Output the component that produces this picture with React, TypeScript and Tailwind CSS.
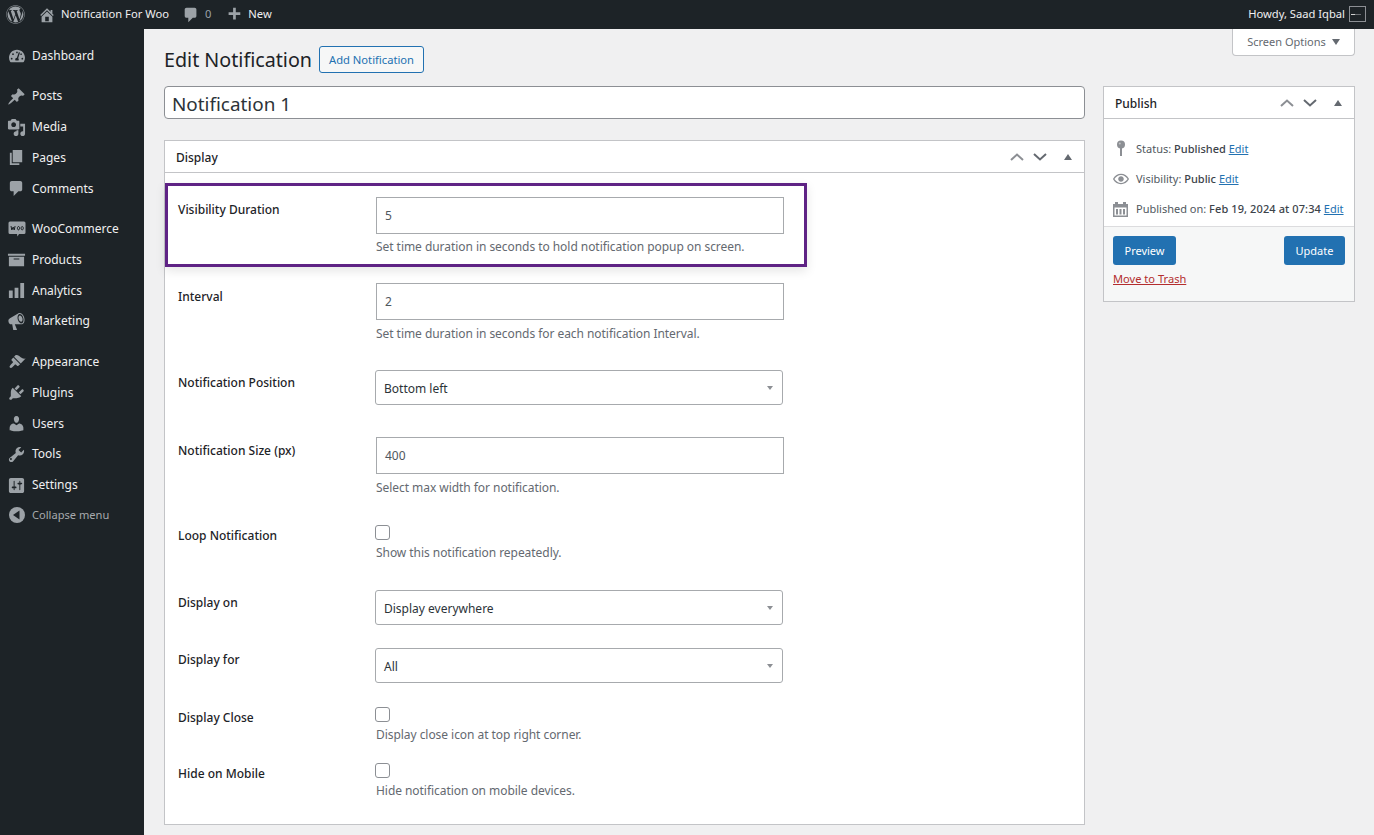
import React from "react";
import { FaWordpress, FaTachometerAlt } from "react-icons/fa";

const ic = "#9ca2a7";
const Dash = ({ d, s = 19, c = ic }: { d: string; s?: number; c?: string }) => (
  <svg width={s} height={s} viewBox="0 0 20 20" fill={c}><path d={d} /></svg>
);
const P = {
  comment: "M5 2h9c1.100 0 2 .9 2 2v7c0 1.100-.9 2-2 2h-2l-5 5v-5H5c-1.100 0-2-.9-2-2V4c0-1.100.9-2 2-2z",
  media: "M13 11V4c0-.55-.45-1-1-1h-1.670L9 1H5L3.670 3H2c-.55 0-1 .45-1 1v7c0 .55.45 1 1 1h10c.55 0 1-.45 1-1zM7 4.500c1.380 0 2.500 1.120 2.500 2.500S8.380 9.500 7 9.500 4.500 8.380 4.500 7 5.620 4.500 7 4.500zM14 6h5v10.500c0 1.380-1.120 2.500-2.500 2.500S14 17.880 14 16.500s1.120-2.500 2.500-2.500c.17 0 .34.020.5.050V9h-3V6zm-4 8.050V13h2v3.500c0 1.380-1.120 2.500-2.500 2.500S7 17.880 7 16.500 8.120 14 9.500 14c.17 0 .34.020.5.050z",
  page: "M6 15V2h10v13H6zm-1 1h8v2H3V5h2v11z",
  archive: "M19 4v2H1V4h18zM2 7h16v10H2V7zm11 3V9H7v1h6z",
  bars: "M18 18V2h-4v16h4zm-6 0V7H8v11h4zm-6 0v-8H2v8h4z",
  users: "M10 9.250c-2.270 0-2.730-3.440-2.730-3.440C7 4.020 7.820 2 9.970 2c2.160 0 2.980 2.020 2.710 3.810 0 0-.41 3.440-2.680 3.440zm0 2.570L12.720 10c2.390 0 4.520 2.330 4.520 4.530v2.490s-3.650 1.130-7.240 1.130c-3.650 0-7.240-1.130-7.240-1.130v-2.490c0-2.250 1.940-4.480 4.470-4.480z",
  tools: "M16.680 9.770c-1.340 1.340-3.300 1.670-4.950.99l-5.410 6.520c-.99.99-2.590.99-3.570 0-.99-.98-.99-2.580 0-3.570l6.520-5.420c-.68-1.650-.35-3.610.99-4.950 1.280-1.280 3.120-1.620 4.720-1.060l-2.890 2.890 2.820 2.820 2.860-2.870c.53 1.580.18 3.400-1.090 4.650zM4.850 15.400c.39-.39.39-1.030 0-1.420-.39-.39-1.030-.39-1.420 0-.39.39-.39 1.030 0 1.420.39.390 1.030.390 1.420 0z",
  settings: "M18 16V4c0-1.100-.9-2-2-2H4c-1.100 0-2 .9-2 2v12c0 1.100.9 2 2 2h12c1.100 0 2-.9 2-2zM8 11h1c.55 0 1 .45 1 1s-.45 1-1 1H8v1.500c0 .28-.22.5-.5.5s-.5-.22-.5-.5V13H6c-.55 0-1-.45-1-1s.45-1 1-1h1V5.500c0-.28.22-.5.5-.5s.5.22.5.5V11zm5-2h-1c-.55 0-1-.45-1-1s.45-1 1-1h1V5.500c0-.28.22-.5.5-.5s.5.22.5.5V7h1c.55 0 1 .45 1 1s-.45 1-1 1h-1v5.500c0 .28-.22.5-.5.5s-.5-.22-.5-.5V9z",
  post: "M10.440 3.020l1.820-1.820 6.360 6.350-1.830 1.820c-1.050-.68-2.480-.57-3.410.36l-.75.750c-.92.930-1.040 2.350-.35 3.410l-1.830 1.820-2.410-2.410-2.800 2.790c-.42.420-3.380 2.710-3.800 2.290s1.860-3.390 2.280-3.810l2.790-2.790L4.100 9.360l1.830-1.820c1.050.69 2.480.57 3.400-.36l.75-.75c.93-.920 1.050-2.350.36-3.410z",
  plugins: "M13.110 4.360L9.870 7.600 8 5.730l3.240-3.240c.35-.34 1.050-.2 1.560.32.52.51.66 1.210.31 1.550zm-8 1.770l.91-1.120 9.010 9.010-1.190.84c-.71.710-2.630 1.160-3.820 1.160H6.140L4.900 17.260c-.59.590-1.540.59-2.120 0-.59-.58-.59-1.530 0-2.120l1.240-1.240v-3.880c0-1.130.4-3.190 1.090-3.890zm7.260 3.970l3.240-3.240c.34-.35 1.040-.21 1.550.31.520.51.66 1.210.31 1.560l-3.240 3.240z",
  appearance: "M14.480 11.060L7.410 3.990l1.500-1.500c.5-.56 2.300-.47 3.510.32 1.210.8 1.430 1.280 2.910 2.100 1.180.64 2.450 1.260 4.230.91zm-.71.71L6.700 4.700 4.930 6.470c-.39.39-.39 1.020 0 1.410l1.060 1.060c.39.39.39 1.030 0 1.420-.6.600-1.140 1.060-1.590 1.490-.25.240-.46.460-.61.650-1 .97-1.580 2-.72 2.860.83.830 1.830.300 2.850-.73.23-.18.47-.41.72-.660.39-.39.73-.77 1.490-1.590.39-.39 1.020-.39 1.410 0l1.060 1.060c.39.39 1.020.39 1.410 0z",
  megaphone: "M18.150 5.940c.46 1.620.38 3.220-.02 4.480-.42 1.280-1.260 2.180-2.300 2.480-.16.06-.26.06-.4.06-.06.02-.12.02-.18.02-.06.02-.14.02-.22.02h-6.800l2.220 5.500c.02.14-.06.26-.14.34-.08.1-.24.16-.34.16H6.950c-.1 0-.26-.06-.34-.16-.08-.08-.16-.2-.14-.34l-1-5.500H4.250l-.02-.02c-.5.060-1.080-.18-1.540-.62s-.88-1.080-1.060-1.880c-.24-.8-.2-1.560-.02-2.200.18-.62.58-1.080 1.060-1.300l.02-.02 9-5.400c.1-.06.18-.1.24-.16.06-.04.14-.08.24-.12.16-.08.28-.12.5-.18 1.040-.3 2.240.1 3.220.98s1.840 2.240 2.260 3.860zm-2.580 5.980h-.02c.4-.1.74-.34 1.040-.7.58-.7.860-1.760.860-3.040 0-.64-.1-1.300-.28-1.980-.34-1.360-1.020-2.500-1.780-3.240s-1.680-1.100-2.460-.88c-.38.12-.72.34-.98.7-.6.7-.88 1.760-.88 3.040 0 .64.1 1.300.28 1.980.34 1.360 1.020 2.500 1.780 3.240.78.74 1.620 1.080 2.440.88zm-.48-1.660c-.56.14-1.200-.2-1.680-.72-.5-.52-.92-1.280-1.140-2.140-.24-.86-.24-1.700-.04-2.380.2-.66.62-1.200 1.160-1.340.56-.14 1.200.2 1.700.74.48.5.9 1.260 1.140 2.120.22.860.22 1.700.02 2.380-.2.66-.6 1.200-1.160 1.340z",
  home: "M16 8.500l1.530 1.530-1.060 1.060L10 4.620l-6.470 6.470-1.060-1.060L10 2.500l4 4v-2h2v4zm-6-2.460l6 5.990V18H4v-5.970zM12 17v-5H8v5h4z",
  plus: "M17 7v3h-5v5H9v-5H4V7h5V2h3v5h5z",
  eye: "M19.700 9.400C17.700 6 14.070 3.500 10 3.500S2.300 6 .3 9.400L0 10l.3.6c2 3.400 5.630 5.900 9.700 5.900s7.700-2.500 9.700-5.900l.3-.6-.3-.6zM10 15c-3.400 0-6.400-2.100-8.200-5C3.600 7.100 6.600 5 10 5s6.400 2.100 8.200 5c-1.800 2.900-4.800 5-8.200 5zm0-8.500C8.100 6.500 6.500 8.100 6.500 10s1.600 3.500 3.500 3.500 3.500-1.600 3.500-3.500S11.900 6.500 10 6.500z",
};

const Woo = () => (
  <svg width="18" height="18" viewBox="0 0 18 18"><path fill={ic} d="M2 1.500h14a1.500 1.500 0 0 1 1.500 1.500v9.500a1.500 1.500 0 0 1-1.500 1.500h-5l-1.500 2.500L9 14H2a1.500 1.500 0 0 1-1.500-1.500V3A1.500 1.500 0 0 1 2 1.500z" /><path fill="none" stroke="#1d2327" strokeWidth="1" d="M3 6l.8 4 1.400-3 1 3 .9-4M10.500 6.500a1.100 1.700 0 1 0 .01 0M14.200 6.500a1.100 1.700 0 1 0 .01 0" /></svg>
);
const Collapse = () => (
  <svg width="16" height="16" viewBox="0 0 16 16"><circle cx="8" cy="8" r="8" fill={ic} /><path d="M10.500 3.500v9L4 8z" fill="#1d2327" /></svg>
);
const Pin = () => (
  <svg width="10" height="16" viewBox="0 0 10 16" fill="#8c8f94"><circle cx="5" cy="4.500" r="4" /><path d="M4 8h2v8H4z" /><circle cx="3.800" cy="3.500" r="1" fill="#c3c4c7" /></svg>
);
const Calendar = () => (
  <svg width="15" height="15" viewBox="0 0 15 15" fill="#8c8f94"><path fillRule="evenodd" d="M0 2h2V0h3v2h5V0h3v2h2v13H0zM1.500 5.500V13.500h12V5.500zM3 7h2v5.500H3zM6.500 7h2v5.500h-2zM10 7h2v5.500h-2z" /></svg>
);
const Arrows = () => (
  <div className="flex items-center">
    <svg width="14" height="8" viewBox="0 0 14 8" fill="none" stroke="#8c8f94" strokeWidth="2"><path d="M1 7l6-5.500L13 7" /></svg>
    <svg className="ml-[9px]" width="14" height="8" viewBox="0 0 14 8" fill="none" stroke="#646970" strokeWidth="2"><path d="M1 1l6 5.500L13 1" /></svg>
    <svg className="ml-[17px]" width="8" height="6" viewBox="0 0 8 6" fill="#646970"><path d="M4 0l4 6H0z" /></svg>
  </div>
);

const menu: { l: string; i: React.ReactNode }[] = [
  { l: "Posts", i: <Dash d={P.post} /> },
  { l: "Media", i: <Dash d={P.media} /> },
  { l: "Pages", i: <Dash d={P.page} /> },
  { l: "Comments", i: <Dash d={P.comment} /> },
];
const menu2: { l: string; i: React.ReactNode }[] = [
  { l: "WooCommerce", i: <Woo /> },
  { l: "Products", i: <Dash d={P.archive} /> },
  { l: "Analytics", i: <Dash d={P.bars} /> },
  { l: "Marketing", i: <Dash d={P.megaphone} /> },
];
const menu3: { l: string; i: React.ReactNode }[] = [
  { l: "Appearance", i: <Dash d={P.appearance} /> },
  { l: "Plugins", i: <Dash d={P.plugins} /> },
  { l: "Users", i: <Dash d={P.users} /> },
  { l: "Tools", i: <Dash d={P.tools} /> },
  { l: "Settings", i: <Dash d={P.settings} /> },
];

const Item = ({ l, i }: { l: string; i: React.ReactNode }) => (
  <div className="flex h-[30.750px] items-center text-[12px] text-[#f0f0f1]">
    <div className="flex w-[32px] justify-center pl-[1px]">{i}</div>
    <span>{l}</span>
  </div>
);

const Label = ({ children, mt }: { children: React.ReactNode; mt: string }) => (
  <div className={`w-[198px] shrink-0 pt-[1px] text-[12px] font-medium leading-[18px] text-[#1d2327] ${mt}`}>{children}</div>
);
const TextField = ({ v }: { v: string }) => (
  <div className="flex h-[37px] w-[408px] items-center border border-[#a7aaad] bg-white pl-[8px] pt-[1px] text-[12px] text-[#50575e]">{v}</div>
);
const Help = ({ children, mt = "mt-[5px]" }: { children: React.ReactNode; mt?: string }) => (
  <div className={`text-[12px] leading-[18px] tracking-[-0.05px] text-[#646970] ${mt}`}>{children}</div>
);
const SelectF = ({ v, top = "pt-[3px]" }: { v: string; top?: string }) => (
  <div className="-ml-[1px] flex h-[35px] w-[408px] items-center justify-between rounded-[3px] border border-[#a7aaad] bg-white pl-[8px] pr-[9px] text-[12px] text-[#2c3338]">
    <span className={top}>{v}</span>
    <svg width="6" height="4" viewBox="0 0 6 4" fill="#8c8f94"><path d="M0 0h6L3 4z" /></svg>
  </div>
);
const Check = () => <div className="-ml-[1px] h-[15px] w-[15px] rounded-[3px] border border-[#8c8f94] bg-white" />;

const Edit = () => <a className="text-[#2271b1] underline">Edit</a>;

export default function App() {
  return (
    <div className="flex h-[835px] w-[1374px] flex-col overflow-hidden bg-[#f0f0f1] font-['Noto_Sans','Open_Sans',sans-serif]">
      <div className="flex h-[29px] shrink-0 items-center justify-between bg-[#1d2327] pl-[6px] pr-[8px] text-[11.200px] text-[#f0f0f1]">
        <div className="flex items-center">
          <FaWordpress size={19} color={ic} />
          <div className="ml-[13px]"><Dash d={P.home} s={18} /></div>
          <span className="ml-[5px]">Notification For Woo</span>
          <div className="ml-[13px]"><Dash d={P.comment} s={18} /></div>
          <span className="ml-[5px] text-[#9ca2a7]">0</span>
          <div className="ml-[14px]"><Dash d={P.plus} s={18} /></div>
          <span className="ml-[5px]">New</span>
        </div>
        <div className="flex items-center">
          <span>Howdy, Saad Iqbal</span>
          <div className="ml-[4px] flex h-[16px] w-[17px] items-center border border-[#8c8f94] bg-[#1d2327] pl-[1px]">
            <div className="h-[1px] w-[4px] bg-[#d0d0d0]" />
            <div className="h-[1px] w-[6px] bg-[#6b6f73]" />
          </div>
        </div>
      </div>
      <div className="flex min-h-0 flex-1">
        <nav className="w-[144px] shrink-0 bg-[#1d2327] pt-[11px]">
          <div className="pt-[1px]"><Item l="Dashboard" i={<FaTachometerAlt size={16} color={ic} />} /></div>
          <div className="mt-[9.300px]">{menu.map((m) => <Item key={m.l} l={m.l} i={m.i} />)}</div>
          <div className="mt-[9.700px]">{menu2.map((m) => <Item key={m.l} l={m.l} i={m.i} />)}</div>
          <div className="mt-[10px]">{menu3.map((m) => <Item key={m.l} l={m.l} i={m.i} />)}</div>
          <div className="-mt-[1px] flex h-[30.750px] items-center text-[11.100px] text-[#a7aaad]">
            <div className="flex w-[32px] justify-center pl-[1px]"><Collapse /></div>
            <span>Collapse menu</span>
          </div>
        </nav>
        <main className="relative min-w-0 flex-1 pl-[20px] pr-[19px]">
          <div className="absolute right-[19px] top-0 flex h-[27px] w-[123px] items-center justify-center rounded-b-[4px] border border-t-0 border-[#c3c4c7] bg-white text-[11px] text-[#646970]">
            Screen Options
            <svg className="ml-[6px]" width="8" height="6" viewBox="0 0 8 6" fill="#646970"><path d="M0 0h8L4 6z" /></svg>
          </div>
          <div className="h-[57px] pt-[17px]">
            <div className="flex h-[27px] items-center">
              <h1 className="text-[19.700px] leading-[27px] text-[#1d2327]">Edit Notification</h1>
              <div className="ml-[7px] flex h-[27px] w-[105px] items-center justify-center rounded-[3px] border border-[#2271b1] bg-[#f6f7f7] pt-[1px] text-[11.200px] text-[#2271b1]">Add Notification</div>
            </div>
          </div>
          <div className="flex gap-[18px]">
            <div className="w-[921px] shrink-0">
              <div className="flex h-[33px] items-center rounded-[4px] border border-[#8c8f94] bg-white pl-[7px] pt-[3px] text-[18.900px] text-[#2c3338]">Notification 1</div>
              <section className="mt-[21px] h-[685px] border border-[#c3c4c7] bg-white">
                <div className="flex h-[32px] items-center justify-between border-b border-[#c3c4c7] pl-[11px] pr-[12px] text-[12px] font-medium text-[#1d2327]">
                  <span className="pt-[2px]">Display</span>
                  <Arrows />
                </div>
                <div className="mt-[10px] flex h-[84px] w-[642px] border-[3px] border-[#5f2385] pl-[10px] pt-[11px] shadow-[0_4px_10px_rgba(0,0,0,0.1)]">
                  <Label mt="mt-[3px]">Visibility Duration</Label>
                  <div>
                    <TextField v="5" />
                    <Help mt="mt-[4px]">Set time duration in seconds to hold notification popup on screen.</Help>
                  </div>
                </div>
                <div className="ml-[13px] mt-[16px] flex">
                  <Label mt="mt-[4px]">Interval</Label>
                  <div>
                    <TextField v="2" />
                    <Help>Set time duration in seconds for each notification Interval.</Help>
                  </div>
                </div>
                <div className="ml-[13px] mt-[27px] flex">
                  <Label mt="mt-[3px]">Notification Position</Label>
                  <SelectF v="Bottom left" />
                </div>
                <div className="ml-[13px] mt-[32px] flex">
                  <Label mt="mt-[4px]">Notification Size (px)</Label>
                  <div>
                    <TextField v="400" />
                    <Help>Select max width for notification.</Help>
                  </div>
                </div>
                <div className="ml-[13px] mt-[28px] flex">
                  <Label mt="mt-[1px]">Loop Notification</Label>
                  <div>
                    <Check />
                    <Help mt="mt-[4px]">Show this notification repeatedly.</Help>
                  </div>
                </div>
                <div className="ml-[13px] mt-[28px] flex">
                  <Label mt="mt-[3px]">Display on</Label>
                  <SelectF v="Display everywhere" />
                </div>
                <div className="ml-[13px] mt-[23px] flex">
                  <Label mt="mt-[2px]">Display for</Label>
                  <SelectF v="All" />
                </div>
                <div className="ml-[13px] mt-[24px] flex">
                  <Label mt="mt-[1px]">Display Close</Label>
                  <div>
                    <Check />
                    <Help mt="mt-[4px]">Display close icon at top right corner.</Help>
                  </div>
                </div>
                <div className="ml-[13px] mt-[19px] flex">
                  <Label mt="mt-[1px]">Hide on Mobile</Label>
                  <div>
                    <Check />
                    <Help mt="mt-[4px]">Hide notification on mobile devices.</Help>
                  </div>
                </div>
              </section>
            </div>
            <aside className="h-[216px] w-[252px] shrink-0 border border-[#c3c4c7] bg-white">
              <div className="flex h-[32px] items-center justify-between border-b border-[#c3c4c7] pl-[11px] pr-[12px] text-[12px] font-medium text-[#1d2327]">
                <span className="pt-[2px]">Publish</span>
                <Arrows />
              </div>
              <div className="h-[107px] pt-[14px] text-[11px] text-[#50575e]">
                <div className="flex h-[30.500px] items-center">
                  <div className="flex w-[32px] justify-center pl-[1px]"><Pin /></div>
                  <span className="pt-[1px]">Status: <b className="font-medium text-[#3c434a]">Published</b> <Edit /></span>
                </div>
                <div className="flex h-[30.500px] items-center">
                  <div className="flex w-[32px] justify-center pl-[1px]"><Dash d={P.eye} s={16} c="#8c8f94" /></div>
                  <span>Visibility: <b className="font-medium text-[#3c434a]">Public</b> <Edit /></span>
                </div>
                <div className="flex h-[30.500px] items-center">
                  <div className="flex w-[32px] justify-center pl-[1px]"><Calendar /></div>
                  <span className="whitespace-nowrap">Published on: <b className="font-medium tracking-[0.1px] text-[#3c434a]">Feb 19, 2024 at 07:34</b> <Edit /></span>
                </div>
              </div>
              <div className="h-[75px] border-t border-[#dcdcde] bg-[#f6f7f7] px-[9px] pt-[9px]">
                <div className="flex justify-between">
                  <div className="flex h-[29px] w-[63px] items-center justify-center rounded-[3px] bg-[#2271b1] pt-[1px] text-[11px] text-white">Preview</div>
                  <div className="flex h-[29px] w-[61px] items-center justify-center rounded-[3px] bg-[#2271b1] pt-[1px] text-[11px] text-white">Update</div>
                </div>
                <a className="mt-[5px] block text-[11.100px] leading-[18px] text-[#b32d2e] underline">Move to Trash</a>
              </div>
            </aside>
          </div>
        </main>
      </div>
    </div>
  );
}
